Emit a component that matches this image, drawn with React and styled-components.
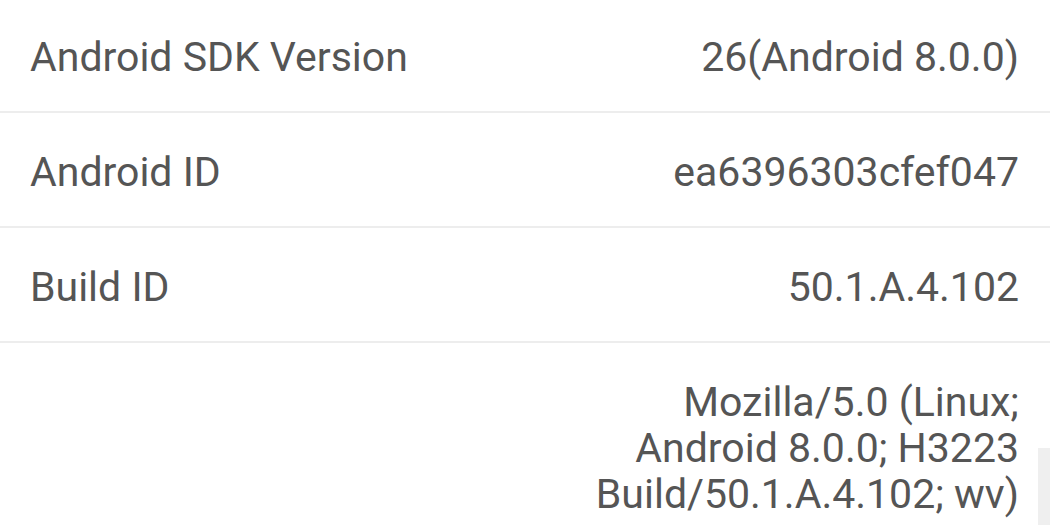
import React from "react";
import styled, { createGlobalStyle } from "styled-components";

const rows = [
  { label: "Android SDK Version", value: "26(Android 8.0.0)" },
  { label: "Android ID", value: "ea6396303cfef047" },
  { label: "Build ID", value: "50.1.A.4.102" },
  {
    label: "",
    value: "Mozilla/5.0 (Linux; Android 8.0.0; H3223 Build/50.1.A.4.102; wv)",
  },
];

function App() {
  return (
    <>
      <GlobalStyle />
      <Screen>
        <List>
          {rows.map((row, i) => (
            <Row key={i}>
              <Label>{row.label}</Label>
              <Value>{row.value}</Value>
            </Row>
          ))}
        </List>
        <ScrollThumb />
      </Screen>
    </>
  );
}

const GlobalStyle = createGlobalStyle`
  html, body {
    margin: 0;
    padding: 0;
    background: #fff;
    overflow: hidden;
  }
`;

const Screen = styled.div`
  position: relative;
  width: 1050px;
  height: 525px;
  overflow: hidden;
  background: #fff;
  font-family: Roboto, "Noto Sans", sans-serif;
  color: #555555;
`;

const List = styled.div`
  display: flex;
  flex-direction: column;
  margin-top: -2px;
`;

const Row = styled.div`
  display: flex;
  justify-content: space-between;
  align-items: center;
  padding: 36px 31px 31px 30px;
  border-bottom: 2px solid #ededed;
  font-size: 41px;
  line-height: 46px;
`;

const Label = styled.div`
  white-space: nowrap;
`;

const Value = styled.div`
  max-width: 430px;
  text-align: right;
`;

const ScrollThumb = styled.div`
  position: absolute;
  right: 0;
  top: 448px;
  width: 12px;
  height: 90px;
  background: #efefef;
`;

export default App;
